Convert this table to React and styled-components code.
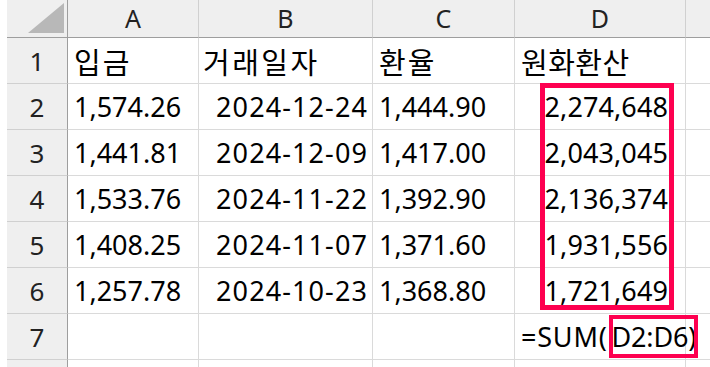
import React from "react";
import styled, { createGlobalStyle } from "styled-components";

const Global = createGlobalStyle`
  html, body { margin: 0; padding: 0; background: #fff; }
  body { font-family: "Noto Sans", "Noto Sans CJK KR", sans-serif; overflow: hidden; }
`;

const Page = styled.div`
  padding-left: 7px;
  width: 710px;
  height: 367px;
  box-sizing: border-box;
  overflow: hidden;
`;

const Sheet = styled.div`
  position: relative;
  display: grid;
  grid-template-columns: 61px 131px 174px 142px 171px 40px;
  grid-template-rows: 38px repeat(8, 46px);
`;

const Corner = styled.div`
  background: #efefef;
  border-right: 1px solid #9e9e9e;
  border-bottom: 1px solid #9e9e9e;
  box-sizing: border-box;
  display: flex;
  align-items: flex-end;
  justify-content: flex-end;
  padding: 0 3px 4px 0;
`;

const ColHead = styled.div`
  background: #efefef;
  border-right: 1px solid #d0d0d0;
  border-bottom: 1px solid #9e9e9e;
  box-sizing: border-box;
  display: flex;
  align-items: center;
  justify-content: center;
  font-size: 25px;
  color: #222;
  padding-bottom: 2px;
`;

const RowHead = styled.div`
  background: #efefef;
  border-right: 1px solid #9e9e9e;
  border-bottom: 1px solid #d0d0d0;
  box-sizing: border-box;
  display: flex;
  align-items: center;
  justify-content: center;
  font-size: 26px;
  color: #222;
`;

const Cell = styled.div`
  border-right: 1px solid #dadada;
  border-bottom: 1px solid #dadada;
  box-sizing: border-box;
  display: flex;
  align-items: center;
  justify-content: ${(p) => (p.$right ? "flex-end" : "flex-start")};
  padding: ${(p) => (p.$right ? `0 ${p.$pr ?? 4}px 0 0` : `0 0 0 ${p.$pl ?? 6}px`)};
  font-size: ${(p) => (p.$ko ? "29px" : "27px")};
  color: #000;
  white-space: nowrap;
  overflow: visible;
  position: relative;
  z-index: ${(p) => (p.$over ? 2 : 1)};
  letter-spacing: ${(p) => p.$ls ?? 0}px;
`;

const RefPart = styled.span`
  letter-spacing: -0.2px;
  margin-left: 4px;
`;

const Mark = styled.div`
  position: absolute;
  border: ${(p) => p.$w}px solid #fe0050;
  box-sizing: border-box;
  pointer-events: none;
  z-index: 3;
`;

const cols = ["A", "B", "C", "D", ""];
const rows = [
  ["1,574.26", "2024-12-24", "1,444.90", "2,274,648"],
  ["1,441.81", "2024-12-09", "1,417.00", "2,043,045"],
  ["1,533.76", "2024-11-22", "1,392.90", "2,136,374"],
  ["1,408.25", "2024-11-07", "1,371.60", "1,931,556"],
  ["1,257.78", "2024-10-23", "1,368.80", "1,721,649"],
];

export default function App() {
  return (
    <Page>
      <Global />
      <Sheet>
        <Corner>
          <svg width="36" height="30" viewBox="0 0 36 30">
            <polygon points="36,0 36,30 0,30" fill="#b8b8b8" />
          </svg>
        </Corner>
        {cols.map((c, i) => (
          <ColHead key={i}>{c}</ColHead>
        ))}

        <RowHead>1</RowHead>
        <Cell $ko $ls={2}>입금</Cell>
        <Cell $ko $ls={2.5} $pl={4}>거래일자</Cell>
        <Cell $ko $ls={2}>환율</Cell>
        <Cell $ko $ls={0.5}>원화환산</Cell>
        <Cell />

        {rows.map((r, i) => (
          <React.Fragment key={i}>
            <RowHead>{i + 2}</RowHead>
            <Cell>{r[0]}</Cell>
            <Cell $right $ls={1.1}>{r[1]}</Cell>
            <Cell>{r[2]}</Cell>
            <Cell $right $pr={17} $ls={0.1}>{r[3]}</Cell>
            <Cell />
          </React.Fragment>
        ))}

        <RowHead>7</RowHead>
        <Cell />
        <Cell />
        <Cell />
        <Cell $over $ls={0.8}>
          =SUM(<RefPart>D2:D6</RefPart>)
        </Cell>
        <Cell />

        <RowHead />
        <Cell />
        <Cell />
        <Cell />
        <Cell />
        <Cell />

        <Mark $w={5} style={{ left: 533, top: 83, width: 134, height: 227 }} />
        <Mark $w={4} style={{ left: 602, top: 315, width: 89, height: 43 }} />
      </Sheet>
    </Page>
  );
}
